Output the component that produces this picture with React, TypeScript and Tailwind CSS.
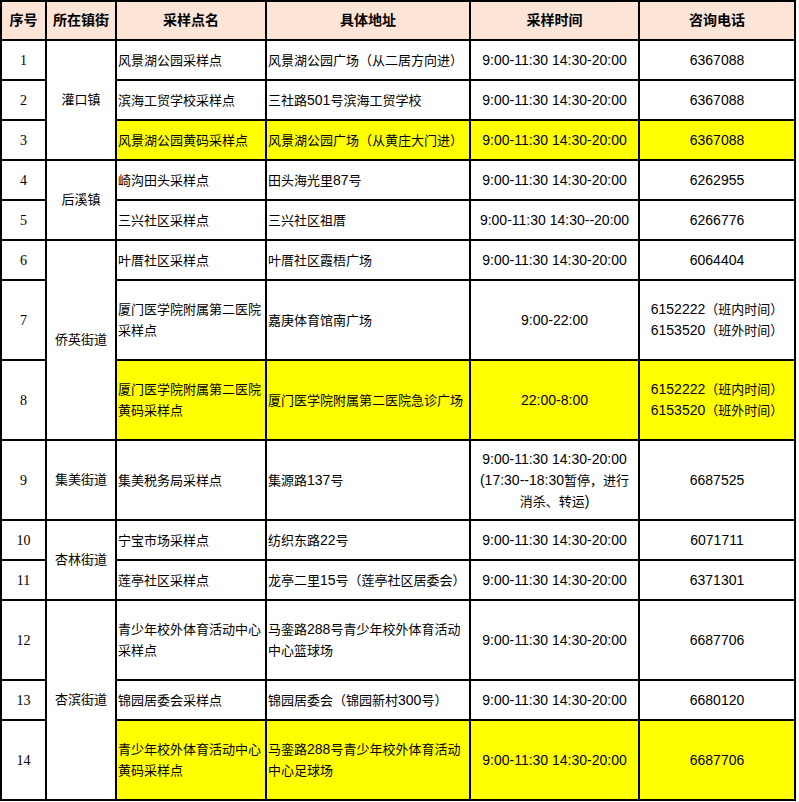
import React from "react";

type Row = {
  no: number;
  district?: { name: string; span: 1 | 2 | 3 };
  site: string[];
  addr: string[];
  time: string[];
  phone: string[];
  yellow?: boolean;
  tall?: boolean;
};

const ROWS: Row[] = [
  { no: 1, district: { name: "灌口镇", span: 3 }, site: ["风景湖公园采样点"], addr: ["风景湖公园广场（从二居方向进）"], time: ["9:00-11:30 14:30-20:00"], phone: ["6367088"] },
  { no: 2, site: ["滨海工贸学校采样点"], addr: ["三社路501号滨海工贸学校"], time: ["9:00-11:30 14:30-20:00"], phone: ["6367088"] },
  { no: 3, site: ["风景湖公园黄码采样点"], addr: ["风景湖公园广场（从黄庄大门进）"], time: ["9:00-11:30 14:30-20:00"], phone: ["6367088"], yellow: true },
  { no: 4, district: { name: "后溪镇", span: 2 }, site: ["崎沟田头采样点"], addr: ["田头海光里87号"], time: ["9:00-11:30 14:30-20:00"], phone: ["6262955"] },
  { no: 5, site: ["三兴社区采样点"], addr: ["三兴社区祖厝"], time: ["9:00-11:30 14:30--20:00"], phone: ["6266776"] },
  { no: 6, district: { name: "侨英街道", span: 3 }, site: ["叶厝社区采样点"], addr: ["叶厝社区霞梧广场"], time: ["9:00-11:30 14:30-20:00"], phone: ["6064404"] },
  { no: 7, tall: true, site: ["厦门医学院附属第二医院", "采样点"], addr: ["嘉庚体育馆南广场"], time: ["9:00-22:00"], phone: ["6152222（班内时间）", "6153520（班外时间）"] },
  { no: 8, tall: true, yellow: true, site: ["厦门医学院附属第二医院", "黄码采样点"], addr: ["厦门医学院附属第二医院急诊广场"], time: ["22:00-8:00"], phone: ["6152222（班内时间）", "6153520（班外时间）"] },
  { no: 9, tall: true, district: { name: "集美街道", span: 1 }, site: ["集美税务局采样点"], addr: ["集源路137号"], time: ["9:00-11:30 14:30-20:00", "(17:30--18:30暂停，进行", "消杀、转运)"], phone: ["6687525"] },
  { no: 10, district: { name: "杏林街道", span: 2 }, site: ["宁宝市场采样点"], addr: ["纺织东路22号"], time: ["9:00-11:30 14:30-20:00"], phone: ["6071711"] },
  { no: 11, site: ["莲亭社区采样点"], addr: ["龙亭二里15号（莲亭社区居委会）"], time: ["9:00-11:30 14:30-20:00"], phone: ["6371301"] },
  { no: 12, tall: true, district: { name: "杏滨街道", span: 3 }, site: ["青少年校外体育活动中心", "采样点"], addr: ["马銮路288号青少年校外体育活动", "中心篮球场"], time: ["9:00-11:30 14:30-20:00"], phone: ["6687706"] },
  { no: 13, site: ["锦园居委会采样点"], addr: ["锦园居委会（锦园新村300号）"], time: ["9:00-11:30 14:30-20:00"], phone: ["6680120"] },
  { no: 14, tall: true, yellow: true, site: ["青少年校外体育活动中心", "黄码采样点"], addr: ["马銮路288号青少年校外体育活动", "中心足球场"], time: ["9:00-11:30 14:30-20:00"], phone: ["6687706"] },
];

const SPAN: Record<number, string> = {
  1: "row-span-1",
  2: "row-span-2",
  3: "row-span-3",
};

// latin runs are set a size up so the CJK stays on a 13px grid
function Mixed({ text }: { text: string }) {
  const parts = text.match(/[\x00-\x7f]+|[^\x00-\x7f]+/g) ?? [];
  return (
    <>
      {parts.map((p, i) =>
        /^[\x00-\x7f]+$/.test(p) ? (
          <span key={i} className="text-[14px]">
            {p}
          </span>
        ) : (
          <span key={i}>{p}</span>
        )
      )}
    </>
  );
}

function Lines({ lines }: { lines: string[] }) {
  return (
    <div className="whitespace-nowrap leading-[21px]">
      {lines.map((l, i) => (
        <div key={i}>
          <Mixed text={l} />
        </div>
      ))}
    </div>
  );
}

function Cell({
  children,
  center = true,
  yellow = false,
  className = "",
}: {
  children: React.ReactNode;
  center?: boolean;
  yellow?: boolean;
  className?: string;
}) {
  return (
    <div
      className={`flex items-center border-r-2 border-b-2 border-black ${
        center ? "justify-center text-center" : "justify-start pl-[1px]"
      } ${yellow ? "bg-[#ffff00]" : "bg-white"} ${className}`}
    >
      {children}
    </div>
  );
}

const HEAD = ["序号", "所在镇街", "采样点名", "具体地址", "采样时间", "咨询电话"];

export default function App() {
  return (
    <div className="bg-white w-[799px] h-[802px]">
      <div
        className="grid w-[796px] grid-cols-[45px_70px_150px_204px_169px_156px] grid-rows-[39px_40px_40px_40px_40px_40px_40px_80px_80px_80px_40px_40px_80px_40px_80px] border-t-2 border-l-2 border-black text-[13px] text-black"
        style={{ fontFamily: '"Liberation Sans", "Noto Sans CJK SC", sans-serif' }}
      >
        {HEAD.map((h) => (
          <div
            key={h}
            className="flex items-center justify-center border-r-2 border-b-2 border-black bg-[#fce4d6] text-[14px] font-bold"
          >
            {h}
          </div>
        ))}
        {ROWS.map((r) => (
          <React.Fragment key={r.no}>
            <Cell className="text-[14px] font-['Liberation_Serif']">{r.no}</Cell>
            {r.district && (
              <Cell className={SPAN[r.district.span]}>{r.district.name}</Cell>
            )}
            <Cell center={false} yellow={r.yellow}>
              <Lines lines={r.site} />
            </Cell>
            <Cell center={false} yellow={r.yellow}>
              <Lines lines={r.addr} />
            </Cell>
            <Cell yellow={r.yellow}>
              <Lines lines={r.time} />
            </Cell>
            <Cell yellow={r.yellow}>
              <Lines lines={r.phone} />
            </Cell>
          </React.Fragment>
        ))}
      </div>
    </div>
  );
}
